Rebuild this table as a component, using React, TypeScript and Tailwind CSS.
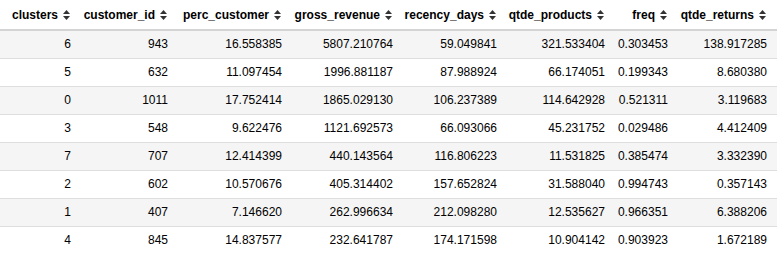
import React from 'react';

type Row = [string, string, string, string, string, string, string, string];

const columns = [
  { key: 'clusters', width: 'w-[76px]' },
  { key: 'customer_id', width: 'w-[97px]' },
  { key: 'perc_customer', width: 'w-[114px]' },
  { key: 'gross_revenue', width: 'w-[111px]' },
  { key: 'recency_days', width: 'w-[104px]' },
  { key: 'qtde_products', width: 'w-[108px]' },
  { key: 'freq', width: 'w-[63px]' },
  { key: 'qtde_returns', width: 'w-[104px]' },
];

const rows: Row[] = [
  ['6', '943', '16.558385', '5807.210764', '59.049841', '321.533404', '0.303453', '138.917285'],
  ['5', '632', '11.097454', '1996.881187', '87.988924', '66.174051', '0.199343', '8.680380'],
  ['0', '1011', '17.752414', '1865.029130', '106.237389', '114.642928', '0.521311', '3.119683'],
  ['3', '548', '9.622476', '1121.692573', '66.093066', '45.231752', '0.029486', '4.412409'],
  ['7', '707', '12.414399', '440.143564', '116.806223', '11.531825', '0.385474', '3.332390'],
  ['2', '602', '10.570676', '405.314402', '157.652824', '31.588040', '0.994743', '0.357143'],
  ['1', '407', '7.146620', '262.996634', '212.098280', '12.535627', '0.966351', '6.388206'],
  ['4', '845', '14.837577', '232.641787', '174.171598', '10.904142', '0.903923', '1.672189'],
];

const SortIcon = () => (
  <svg width="7" height="10" viewBox="0 0 7 10" className="shrink-0 fill-[#333]">
    <polygon points="3.5,0 7,4 0,4" />
    <polygon points="0,6 7,6 3.5,10" />
  </svg>
);

export default function App() {
  return (
    <div className="w-[777px] h-[257px] overflow-hidden bg-white font-['Liberation_Sans',Arial,sans-serif] text-[12px] text-black">
      <table className="table-fixed border-collapse w-[777px]">
        <colgroup>
          {columns.map((c) => (
            <col key={c.key} className={c.width} />
          ))}
        </colgroup>
        <thead>
          <tr className="h-[30px] border-b-2 border-[#d4d4d4]">
            {columns.map((c, i) => (
              <th
                key={c.key}
                className={`p-0 pl-[6px] font-bold ${i === columns.length - 1 ? 'pr-[10px]' : 'pr-[5px]'}`}
              >
                <div className="flex items-center justify-end gap-[5px] pt-[1px] pr-[1px] whitespace-nowrap">
                  <span>{c.key}</span>
                  <SortIcon />
                </div>
              </th>
            ))}
          </tr>
        </thead>
        <tbody>
          {rows.map((r, ri) => (
            <tr
              key={ri}
              className={`h-[28px] ${ri % 2 === 0 ? 'bg-[#f5f5f5]' : 'bg-white'} ${ri === rows.length - 1 ? '' : 'border-b border-[#dedede]'}`}
            >
              {r.map((v, ci) => (
                <td
                  key={ci}
                  className={`p-0 pl-[6px] text-right whitespace-nowrap ${ci === r.length - 1 ? 'pr-[10px]' : 'pr-[5px]'}`}
                >
                  {v}
                </td>
              ))}
            </tr>
          ))}
        </tbody>
      </table>
    </div>
  );
}
